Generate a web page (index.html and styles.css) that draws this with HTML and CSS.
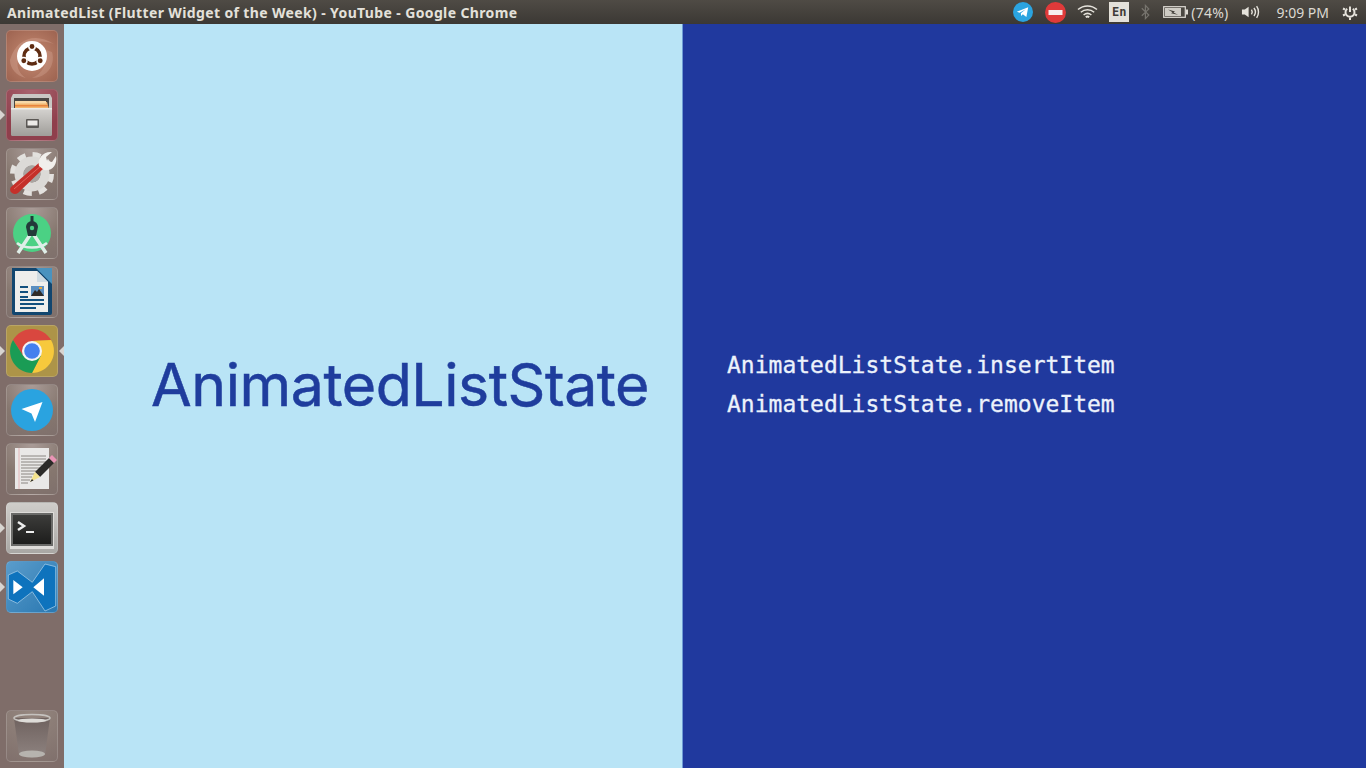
FILE: index.html
```html
<!DOCTYPE html>
<html lang="en">
<head>
<meta charset="utf-8">
<title>AnimatedList (Flutter Widget of the Week) - YouTube - Google Chrome</title>
<link rel="stylesheet" href="styles.css">
</head>
<body>
<header class="topbar">
  <div class="title">AnimatedList (Flutter Widget of the Week) - YouTube - Google Chrome</div>
  <div class="tray">
    <svg class="t-tg" width="20" height="20" viewBox="0 0 20 20"><circle cx="10" cy="10" r="10" fill="#2ba4e0"/><path d="M3.800 9.800 15.200 5.200 13.400 15 9.800 12.200 8.200 14 7.800 11.200 12.800 7.200 6.600 10.800Z" fill="#fff"/></svg>
    <svg class="t-stop" width="21" height="21" viewBox="0 0 21 21"><circle cx="10.500" cy="10.500" r="10.500" fill="#df3a3a"/><rect x="3.500" y="8" width="14" height="5" fill="#f6eeee"/></svg>
    <svg class="t-wifi" width="21" height="16" viewBox="0 0 21 16" fill="none" stroke="#e6e3dc" stroke-width="1.500"><path d="M1 5.500C6.500.7 14.500.7 20 5.500"/><path d="M3.800 8.300C7.600 5 13.400 5 17.200 8.300"/><path d="M6.600 11C9 9 12 9 14.400 11"/><path d="M8.800 13.200C10 12.300 11 12.300 12.200 13.200" stroke-width="2"/></svg>
    <div class="t-lang">En</div>
    <svg class="t-bt" width="9" height="16" viewBox="0 0 9 16" fill="none" stroke="#77746e" stroke-width="1.200"><path d="M.8 4.200 7.800 11 4.400 14.600V1.400L7.800 5 .8 11.800"/></svg>
    <svg class="t-batt" width="25" height="14" viewBox="0 0 25 14"><rect x=".7" y="1.700" width="21.600" height="10.600" fill="#4a4741" stroke="#dedbd4" stroke-width="1.200"/><rect x="2" y="3" width="16" height="8" fill="#cfccc5"/><path d="M5 4.500 12 6.500 10.500 7.400 15 9.800 8 8.200 9.500 7.200Z" fill="#3f3c37"/><rect x="23" y="4.500" width="2" height="5" fill="#dedbd4"/></svg>
    <div class="t-pct">(74%)</div>
    <svg class="t-vol" width="20" height="16" viewBox="0 0 21 16" fill="none" stroke="#e6e3dc" stroke-width="1.500"><path d="M1 5.500H4L8 2.500V13.500L4 10.500H1Z" fill="#e6e3dc" stroke="none"/><path d="M11 5.500C12 7 12 9 11 10.500"/><path d="M13.600 3.800C15.400 6.200 15.400 9.800 13.600 12.200"/><path d="M16.400 1.800C19 5.400 19 10.600 16.400 14.200"/></svg>
    <div class="t-time">9:09 PM</div>
    <svg class="t-pow" width="16" height="16" viewBox="0 0 16 16" fill="none" stroke="#e6e3dc"><path d="M8 2.500V8" stroke-width="2"/><path d="M5.200 4.800A4.500 4.500 0 1 0 10.800 4.800" stroke-width="2"/><path d="M8 13.500V16M1 11.500 3 10.500M15 11.500 13 10.500M1 4.500 3 5.500M15 4.500 13 5.500" stroke-width="2"/></svg>
  </div>
</header>
<div class="desktop">
  <nav class="dock">
    <div class="tile tile-ubuntu">
      <svg width="52" height="52" viewBox="0 0 52 52"><path d="M4 30C10 8 30 2 48 14 34 8 18 12 12 30 10 38 14 44 20 48 10 46 4 38 4 30Z" fill="#dcb09e" opacity=".35"/><path d="M46 22C50 36 40 48 26 48 36 44 42 34 40 20Z" fill="#dcb09e" opacity=".3"/><circle cx="26" cy="26" r="15" fill="#fff"/><circle cx="26" cy="26" r="8" fill="none" stroke="#5e2c12" stroke-width="3.500"/><g stroke="#fff" stroke-width="1.500"><circle cx="26" cy="16.500" r="3.200" fill="#5e2c12"/><circle cx="17.800" cy="30.800" r="3.200" fill="#5e2c12"/><circle cx="34.200" cy="30.800" r="3.200" fill="#5e2c12"/></g></svg>
    </div>
    <div class="tile tile-files running">
      <svg width="52" height="52" viewBox="0 0 52 52"><defs><linearGradient id="cab" x1="0" y1="0" x2="0" y2="1"><stop offset="0" stop-color="#d6d4d1"/><stop offset="1" stop-color="#9f9d99"/></linearGradient></defs><path d="M7 5H44L46 9V21H5V9Z" fill="#c9c7c4"/><rect x="8" y="9" width="35" height="13" fill="#4a4744"/><path d="M9 13H41L43 20H9Z" fill="#f2b56f"/><rect x="9" y="12" width="31" height="2.500" fill="#f7d8a8"/><rect x="9" y="16" width="33" height="1.500" fill="#e8843e"/><rect x="5" y="19" width="41" height="28" rx="1.500" fill="url(#cab)"/><rect x="5" y="19" width="41" height="1.500" fill="#ecebe8"/><rect x="20" y="30" width="13" height="9" rx="1" fill="#5a5754"/><rect x="21.500" y="31.500" width="10" height="5" fill="#eceae7"/></svg>
    </div>
    <div class="tile tile-gray">
      <svg width="52" height="52" viewBox="0 0 52 52"><g fill="none"><circle cx="26" cy="26" r="19" stroke="#e3e1de" stroke-width="6" stroke-dasharray="8 6.920"/><circle cx="26" cy="26" r="13" stroke="#dcdad7" stroke-width="9"/></g><circle cx="26" cy="26" r="8.500" fill="#a9a5a2"/><path d="M5 39 34 14 39 19 12 45C7 48 2 43 5 39Z" fill="#c4302a"/><path d="M8 41 36 17" stroke="#e2605a" stroke-width="1"/><path d="M33 18C31 11 37 3 46 4L40 9 41 13 46 14 50 8C52 17 45 24 38 22Z" fill="#f1efec"/></svg>
    </div>
    <div class="tile tile-gray">
      <svg width="52" height="52" viewBox="0 0 52 52"><circle cx="26" cy="26" r="19" fill="#4bd184"/><path d="M24 28 12 46M28 28 40 46" stroke="#dfeee8" stroke-width="3.500"/><path d="M11 36C18 42 34 42 41 36" fill="none" stroke="#dfeee8" stroke-width="2.500"/><path d="M20 20A6 6 0 0 1 32 20L30 29H22Z" fill="#233a3a"/><rect x="24.500" y="9" width="3" height="8" fill="#233a3a"/><circle cx="26" cy="21" r="2.200" fill="#4bd184"/></svg>
    </div>
    <div class="tile tile-gray">
      <svg width="52" height="52" viewBox="0 0 52 52"><path d="M6 2H46V47Q46 49 44 49H8Q6 49 6 47Z" fill="#12466f"/><path d="M30 2H46V18Z" fill="#4a93bf"/><path d="M9 5H31L42 16V46H9Z" fill="#eeeeec"/><path d="M31 5V16H42Z" fill="#cfdbe2"/><path d="M14 20H22V22H14ZM14 25H22V27H14ZM14 30H22V32H14ZM14 33H38V35H14ZM14 37H38V39H14ZM14 41H30V43H14Z" fill="#12507e"/><rect x="25" y="20" width="13" height="10" fill="#5a8ec0"/><path d="M25 30 29 24 31 26 33 23 38 30Z" fill="#2f2b28"/><rect x="33" y="21" width="3" height="2" fill="#e7a942"/></svg>
    </div>
    <div class="tile tile-chrome running both">
      <svg width="52" height="52" viewBox="0 0 52 52"><path d="M7 15A22 22 0 0 1 45 15L26 16 17.300 31Z" fill="#d9473f"/><path d="M45 15A22 22 0 0 1 26 48L34.700 31 26 16Z" fill="#f7c93c"/><path d="M26 48A22 22 0 0 1 7 15L17.300 31 34.700 31Z" fill="#1a9c55"/><circle cx="26" cy="26" r="10" fill="#f4f4f4"/><circle cx="26" cy="26" r="7.800" fill="#4480ee"/></svg>
    </div>
    <div class="tile tile-gray">
      <svg width="52" height="52" viewBox="0 0 52 52"><circle cx="26" cy="26" r="21" fill="#2aa3e0"/><path d="M15.500 25 36.500 18 29 38 25.500 29.500Z" fill="#fff"/></svg>
    </div>
    <div class="tile tile-gray">
      <svg width="52" height="52" viewBox="0 0 52 52"><rect x="9" y="5" width="34" height="41" fill="#e9e8e7"/><path d="M13 5V46" stroke="#e3a9ad" stroke-width=".8"/><path d="M15 13H40M15 16H40M15 19H40M15 22H36M15 25H34M15 28H32M15 31H29M15 34H26M15 37H24M15 40H22" stroke="#8a8682" stroke-width="1"/><path d="M29 29 43 15 48 20 34 34Z" fill="#2b2a28"/><path d="M43 15 46 12 51 17 48 20Z" fill="#e994b5"/><path d="M29 29 34 34 24 39Z" fill="#f3e28c"/><path d="M26 36 27.500 37.500 24 39Z" fill="#2b2a28"/></svg>
    </div>
    <div class="tile tile-term running">
      <svg width="52" height="52" viewBox="0 0 52 52"><defs><linearGradient id="scr" x1="0" y1="0" x2="0" y2="1"><stop offset="0" stop-color="#3c3c3a"/><stop offset="1" stop-color="#1d1d1c"/></linearGradient></defs><rect x="4" y="10" width="44" height="37" fill="#dedcd9"/><rect x="5" y="11" width="42" height="33" fill="#6a6a68"/><rect x="7" y="13" width="38" height="29" fill="url(#scr)"/><path d="M12 20 18 24 12 28" fill="none" stroke="#eee" stroke-width="2.500"/><rect x="20" y="29" width="8" height="2" fill="#eee"/></svg>
    </div>
    <div class="tile tile-code running">
      <svg width="52" height="52" viewBox="0 0 52 52"><path d="M2.300 14 11.300 10 26.300 21.300 39 3 49.700 5.700V45L39 50 26.300 30.700 11.300 42.300 2.300 38Z" fill="#0e73bd" stroke="#9fc9e6" stroke-width=".8"/><path d="M7.300 19 16.700 26.300 7.300 33.300Z" fill="#fff"/><path d="M38 17.300V34.700L27.300 26.300Z" fill="#fff"/></svg>
    </div>
    <div class="tile tile-trash">
      <svg width="52" height="52" viewBox="0 0 52 52"><defs><linearGradient id="bin" x1="0" y1="0" x2="0" y2="1"><stop offset="0" stop-color="#6f625f"/><stop offset="1" stop-color="#8e8380"/></linearGradient></defs><path d="M8 8H44L39 45Q26 50 13 45Z" fill="url(#bin)"/><ellipse cx="26" cy="44" rx="13" ry="3.500" fill="#b6b3ae"/><ellipse cx="26" cy="8" rx="18" ry="3.500" fill="none" stroke="#c5c2be" stroke-width="1.500"/><ellipse cx="26" cy="10.500" rx="14" ry="2" fill="#dedcd8"/></svg>
    </div>
  </nav>
  <main class="slide">
    <section class="panel-left"><h1 class="heading">AnimatedListState</h1></section>
    <section class="panel-right">
      <p class="code">AnimatedListState.insertItem</p>
      <p class="code">AnimatedListState.removeItem</p>
    </section>
  </main>
</div>
</body>
</html>
```
FILE: styles.css
```css
* { box-sizing: border-box; }
html, body { margin: 0; height: 100%; overflow: hidden; }
body { display: flex; flex-direction: column; width: 1366px; height: 768px; font-family: "Open Sans", sans-serif; }
.topbar { height: 24px; flex: none; display: flex; align-items: center; justify-content: space-between; background: linear-gradient(#4f4b45, #3b3834); color: #e4e1da; }
.title { padding-left: 7px; font: 700 14px "Noto Sans", sans-serif; letter-spacing: .37px; white-space: nowrap; }
.tray { display: flex; align-items: center; height: 24px; padding-right: 8px; font: 14px "Noto Sans", sans-serif; }
.t-tg { margin-right: 12px; }
.t-stop { margin-right: 11px; }
.t-wifi { margin-right: 11px; }
.t-lang { width: 20px; height: 20px; margin-right: 12px; background: #e4e1da; color: #3f3c38; font: 700 12px/20px "DejaVu Sans Mono", monospace; text-align: center; }
.t-bt { margin-right: 13px; }
.t-batt { margin-right: 3px; }
.t-pct { margin-right: 13px; color: #dcd9d2; letter-spacing: .2px; }
.t-vol { margin-right: 15px; }
.t-time { margin-right: 13px; color: #dcd9d2; }
.desktop { flex: 1; min-height: 0; display: flex; }
.dock { width: 64px; flex: none; display: flex; flex-direction: column; gap: 7px; padding: 6px 6px; background: #7f6d69; }
.tile { position: relative; width: 52px; height: 52px; flex: none; border-radius: 5px; border: 1px solid rgba(255,255,255,.16); }
.tile svg { position: absolute; left: -1px; top: -1px; display: block; }
.tile-gray { background: radial-gradient(circle at 50% 0, #a99b97, #86776f 60%, #7f706c); }
.tile-ubuntu { background: radial-gradient(circle at 50% 50%, #c58a72, #9d6350); }
.tile-files { background: radial-gradient(circle at 50% 0, #a9646f, #8f3f4c 70%); }
.tile-chrome { background: #ad9448; }
.tile-term { background: linear-gradient(#cfcdca, #a9a7a4); }
.tile-code { background: linear-gradient(135deg, #5a9ccb, #2a78b1); }
.tile-trash { margin-top: auto; background: radial-gradient(circle at 50% 0, #95877f, #80706c); }
.running::before { content: ""; position: absolute; left: -7px; top: 20px; border: 5px solid transparent; border-left-color: #d8d5d1; border-right-width: 0; }
.both::after { content: ""; position: absolute; right: -7px; top: 20px; border: 5px solid transparent; border-right-color: #d8d5d1; border-left-width: 0; }
.slide { flex: 1; display: flex; }
.panel-left { width: 619px; flex: none; display: flex; align-items: center; padding: 0 0 24px 87px; background: #b9e4f6; border-right: 1px solid #6e9bd4; }
.heading { margin: 0; font: 400 59px Inter, sans-serif; letter-spacing: -.45px; -webkit-text-stroke: .5px #1f3d9d; color: #1f3d9d; white-space: nowrap; }
.panel-right { flex: 1; display: flex; flex-direction: column; gap: 14px; padding: 329px 0 0 44px; background: #20399e; }
.code { margin: 0; font: 23px/25px "DejaVu Sans Mono", monospace; -webkit-text-stroke: .3px #ecf2fb; color: #ecf2fb; white-space: nowrap; }
```
